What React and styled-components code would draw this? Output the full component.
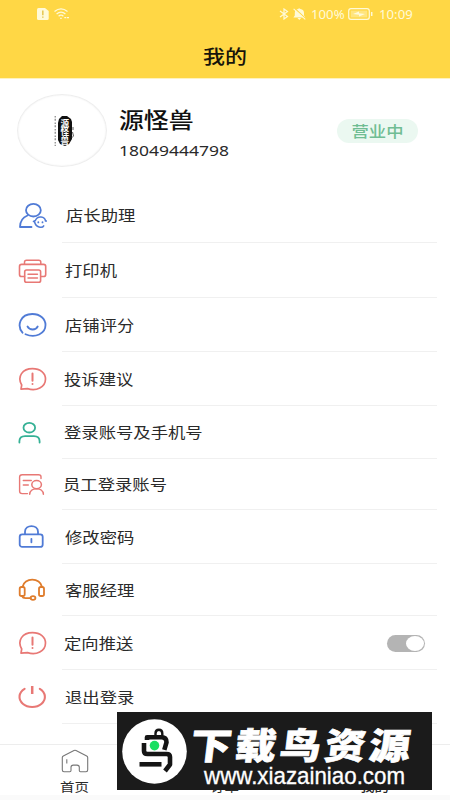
import React from "react";
import styled, { createGlobalStyle } from "styled-components";

const GlobalStyle = createGlobalStyle`
  * {
    box-sizing: border-box;
  }
  body {
    margin: 0;
    background: #fff;
    font-family: "Noto Sans", "Noto Sans CJK SC", sans-serif;
    color: #2a2a2a;
    overflow: hidden;
  }
  svg {
    display: block;
    flex: none;
  }
`;

const Page = styled.div`
  position: relative;
  width: 450px;
  height: 800px;
  overflow: hidden;
  display: flex;
  flex-direction: column;
  background: #fff;
`;

// the whole screen uses slightly widened lettering
const Wide = styled.span`
  display: inline-block;
  white-space: nowrap;
  line-height: 1;
  font-size: ${(p) => p.$size}px;
  font-weight: ${(p) => p.$weight || 400};
  transform: scaleX(${(p) => p.$stretch || 1.155});
  transform-origin: ${(p) => p.$origin || "left"} center;
`;

const Header = styled.header`
  height: 79px;
  flex: none;
  background: #ffd745;
  border-bottom: 1px solid #fff3bf;
`;

const StatusBar = styled.div`
  height: 28px;
  padding: 0 37px 0 37px;
  display: flex;
  align-items: center;
  justify-content: space-between;
  color: #fffad8;
`;

const StatusGroup = styled.div`
  display: flex;
  align-items: center;
  gap: ${(p) => p.$gap}px;
`;

const StatusText = styled.div`
  width: ${(p) => p.$width}px;
  margin-left: ${(p) => p.$left}px;
  padding-top: 1px;
  display: flex;
`;

const Title = styled.h1`
  margin: 0;
  height: 58px;
  display: flex;
  align-items: center;
  justify-content: center;
  color: #17140a;
  font-weight: 400;
`;

const Profile = styled.section`
  height: 109px;
  flex: none;
  padding: 15px 32px 0 17px;
  display: flex;
  align-items: flex-start;
`;

const Avatar = styled.div`
  width: 90px;
  height: 73px;
  border-radius: 50%;
  border: 1px solid #eee;
  box-shadow: inset 0 0 2px #eee;
  display: flex;
  align-items: center;
  justify-content: center;
`;

const Names = styled.div`
  flex: 1;
  padding: 15px 0 0 12px;
  display: flex;
  flex-direction: column;
  gap: 12px;
`;

const Name = styled(Wide)`
  color: #111;
  align-self: flex-start;
`;

const Phone = styled(Wide)`
  align-self: flex-start;
`;

const Badge = styled.div`
  width: 81px;
  height: 24px;
  margin-top: 25px;
  border-radius: 12px;
  background: #ebf8f1;
  color: #70bd93;
  display: flex;
  align-items: center;
  justify-content: center;
`;

const Menu = styled.main`
  flex: 1;
`;

const Row = styled.div`
  height: ${(p) => p.$height}px;
  padding-left: 17px;
  display: flex;
`;

const IconCell = styled.div`
  width: 45px;
  display: flex;
  align-items: center;
`;

const RowBody = styled.div`
  width: 375px;
  padding: 1px 12px 0 ${(p) => p.$indent}px;
  border-bottom: 1px solid #f0f0f0;
  display: flex;
  align-items: center;
  justify-content: space-between;
`;

const Switch = styled.div`
  width: 38px;
  height: 17px;
  padding: 1px;
  border-radius: 9px;
  background: #b4b4b4;
  display: flex;
  justify-content: flex-end;
`;

const Knob = styled.div`
  width: 18px;
  height: 15px;
  border-radius: 50%;
  background: #fff;
`;

const TabBar = styled.nav`
  height: 56px;
  flex: none;
  display: grid;
  grid-template-columns: repeat(3, 1fr);
  border-top: 1px solid #ededed;
  border-bottom: 5px solid #fafafa;
`;

const Tab = styled.div`
  display: flex;
  flex-direction: column;
  align-items: center;
  justify-content: space-between;
  padding: 4px 0 1px;
`;

const Banner = styled.aside`
  position: absolute;
  left: 117px;
  top: 712px;
  width: 315px;
  height: 78px;
  padding-left: 5px;
  display: flex;
  align-items: center;
  background: #1b1b1b;
  color: #fff;
`;

const BannerText = styled.div`
  padding-left: 4px;
  height: 78px;
  display: flex;
  flex-direction: column;
`;

const BannerTitle = styled.div`
  margin-top: 7px;
  font: 900 41px/48px "Noto Sans CJK SC", sans-serif;
  -webkit-text-stroke: 0.8px #fff;
  white-space: nowrap;
  letter-spacing: 3.7px;
  transform: skewX(-7deg) scaleY(0.88);
`;

const BannerUrl = styled.div`
  margin: -4px 0 0 13px;
  font: 22px/26px "Liberation Sans", sans-serif;
  -webkit-text-stroke: 0.3px #fff;
  white-space: nowrap;
  transform: scale(1.015, 1.08);
  transform-origin: left;
`;

const BLUE = "#507bd6";
const RED = "#e87875";
const GREEN = "#35b195";
const ORANGE = "#df7c2c";

const Icon = ({ color, width = 30, children }) => (
  <svg
    width={width}
    height="30"
    viewBox={`0 0 ${width} 30`}
    fill="none"
    stroke={color}
    strokeWidth="1.8"
    strokeLinecap="round"
    strokeLinejoin="round"
  >
    {children}
  </svg>
);

const AssistantIcon = () => (
  <Icon color={BLUE}>
    <ellipse cx="16.4" cy="9.2" rx="7.4" ry="6.3" />
    <path d="M10.5 14.5C5.5 16.5 3 20 3 26h11.5" />
    <path d="M16.5 20.5l2-1.2c2-5 9.5-4 10 .8h1.2M17.5 20.5c1.2 6.5 8 6.7 9.2 4.3" strokeWidth="1.5" />
    <path d="M21.3 21.2v.2M25.5 21.2v.2" />
  </Icon>
);

const PrinterIcon = () => (
  <Icon color={RED}>
    <path d="M7.5 8V6.3Q7.5 4.3 9.5 4.3h12.3q2 0 2 2V8" strokeWidth="1.5" />
    <path
      d="M7.5 20.5H4.7Q2.5 20.5 2.5 18.4v-8q0-2 2.2-2h21.8q2.2 0 2.2 2v8q0 2.1-2.2 2.1h-2.7"
      strokeWidth="1.6"
    />
    <rect x="7.7" y="14" width="15.9" height="12.2" rx="1.8" strokeWidth="1.6" />
    <path d="M11 18.2h9.5M11 22h9.5" strokeWidth="1.4" />
  </Icon>
);

const SmileIcon = () => (
  <Icon color={BLUE}>
    <path d="M5.5 22.7C-.5 15.5 3.3 4 15.3 4c8 0 13.2 5 13.2 11 0 8.7-10.3 13.5-20 9.2" />
    <path d="M10.5 16.5c2.2 4 8.2 4 10.2 0" />
  </Icon>
);

const AlertIcon = () => (
  <Icon color={RED}>
    <path
      d="M4 25.2l.7-4.2C-.2 12.5 5.5 4.6 15.5 4.6c7.8 0 13 4.6 13 10.4 0 8-9.2 12.8-18 9.6z"
      strokeWidth="1.7"
    />
    <path d="M15.5 9.5v7.3M15.5 20v.1" strokeWidth="2" />
  </Icon>
);

const PersonIcon = () => (
  <Icon color={GREEN}>
    <ellipse cx="12.3" cy="9.7" rx="5.8" ry="4.8" />
    <path d="M2.4 24.5v-1.2q0-5.2 5.7-5.2h8.8q5.7 0 5.7 5.2v1.2" />
  </Icon>
);

const StaffIcon = () => (
  <Icon color={RED}>
    <path
      d="M24 8.5V6.8Q24 4.8 21.5 4.8H5.2Q2.6 4.8 2.6 7v14.3q0 2.3 2.6 2.3h5.3M6.3 10.5h8M6.3 15h5"
      strokeWidth="1.4"
    />
    <ellipse cx="19.6" cy="14.6" rx="4.8" ry="4.1" strokeWidth="1.5" />
    <path d="M12.7 24.3c.2-7.4 13.5-7.4 13.7 0" strokeWidth="1.5" />
  </Icon>
);

const LockIcon = () => (
  <Icon color={BLUE}>
    <rect x="2.7" y="12.3" width="23" height="12.6" rx="2.5" />
    <path d="M8 12v-2.2C8 2.3 21 2.3 21 9.8V12M14.4 16.8v3.5" />
  </Icon>
);

const HeadsetIcon = () => (
  <Icon color={ORANGE}>
    <path d="M5.5 12C7 2.2 23.5 2.2 25 12" />
    <rect x="2.7" y="12" width="5" height="9" rx="1.8" />
    <rect x="22" y="12" width="5" height="9" rx="1.8" />
    <path d="M5 21.2q.8 2 3.5 2h5.2" />
    <ellipse cx="16" cy="23" rx="2.4" ry="1.8" />
  </Icon>
);

const PowerIcon = () => (
  <Icon color={RED}>
    <path d="M7.6 6.8A12.7 10.1 0 1 0 22.8 6.8" strokeWidth="2.1" />
    <path d="M15.2 4v8" strokeWidth="2.5" strokeLinecap="butt" />
  </Icon>
);

const AvatarLogo = () => (
  <svg width="30" height="42" viewBox="0 0 30 42">
    <path d="M12 9l3-3h5l4 3 1 3v17l-3 5-4 2-5-2-2-4V13z" fill="#111" />
    <path d="M26 17v3M25.5 22l1 4-2 2" stroke="#333" fill="none" strokeWidth=".8" />
    <g fill="#fff" fontSize="8.6" fontWeight="700" textAnchor="middle" fontFamily="Noto Sans CJK SC">
      <text x="17.8" y="16.5">源</text>
      <text x="17.8" y="25">怪</text>
      <text x="17.8" y="33.5">兽</text>
    </g>
    <path d="M8.2 6v30" stroke="#777" strokeWidth="1.1" strokeDasharray="1.5 1.2 2 1.8" />
  </svg>
);

const BirdLogo = () => (
  <svg width="65" height="65" viewBox="0 0 65 65">
    <circle cx="32.5" cy="32.5" r="32.3" fill="#fff" />
    <g fill="none" stroke="#151515" strokeWidth="4.6" strokeLinejoin="round">
      <path d="M33.5 17.5v-3q0-3.7 3.4-3.7t3.4 3.7v3" strokeWidth="2.4" />
      <path d="M25 21v-2.7h14.5q5 0 5 5l-2.2 7.5" />
      <path d="M22 24v8q0 3 3.5 3h19q3.5 0 3.5 3v7.5L43 52" />
      <path d="M17.5 45.3h22" />
    </g>
    <circle cx="32.5" cy="26.6" r="4.8" fill="#19df61" />
  </svg>
);

const SimIcon = () => (
  <svg width="12" height="12" viewBox="0 0 12 12">
    <path d="M1.5 0H8l3.7 3v7.5q0 1.5-1.5 1.5H1.5Q0 12 0 10.5v-9Q0 0 1.5 0z" fill="currentColor" />
    <path d="M5.8 2.5v4.7M5.8 8.5v1.3" stroke="#e7c957" strokeWidth="1.6" />
  </svg>
);

const WifiIcon = () => (
  <svg width="16" height="12" viewBox="0 0 16 12" fill="none" stroke="currentColor" strokeWidth="1.3">
    <path d="M.5 3.5Q7 -1.8 13.5 3.5M2.6 6Q7 2.3 11.4 6M4.6 8.2Q7 6.2 9.4 8.2M6.2 10.3h1.5M10.3 9.6h2M13 9.6h2" />
  </svg>
);

const BluetoothIcon = () => (
  <svg width="10" height="12" viewBox="0 0 10 12" fill="none" stroke="currentColor" strokeWidth="1.2">
    <path d="M1 3l7.5 5.5L5 11V1l3.5 2.5L1 9" />
  </svg>
);

const MutedBellIcon = () => (
  <svg width="13" height="12" viewBox="0 0 13 12">
    <path d="M6.2.3l1.2.8q3.6.6 3.6 4v2.3l1.4 2H.4l1.4-2V5.1Q1.8 1.7 5 1.1zM4.5 10h3.6L6.3 12z" fill="currentColor" />
    <path d="M1.3 0l11.2 10.4" stroke="#ffd745" strokeWidth="1.2" />
    <path d="M.6 .8l11.7 10.6" stroke="currentColor" strokeWidth="1.1" />
  </svg>
);

const BatteryIcon = () => (
  <svg width="25" height="12" viewBox="0 0 25 12" fill="none" stroke="currentColor">
    <rect x=".7" y=".7" width="20.6" height="10.6" rx="2.3" strokeWidth="1.2" />
    <rect x="2.8" y="2.6" width="16.4" height="6.8" fill="currentColor" opacity=".4" stroke="none" />
    <path d="M5 6l6-2.5v1.7l6 .8-6 2.5V6.8z" fill="currentColor" stroke="none" />
    <path d="M23.7 4v4" strokeWidth="1.5" />
  </svg>
);

const HomeIcon = () => (
  <svg width="28" height="24" viewBox="0 0 28 24" fill="none" stroke="#777" strokeWidth="1.1">
    <path
      d="M3 22.7q-1.7 0-1.7-2V8.5q0-1 1-1.5L13 1.5q1-.5 2 0L25.7 7q1 .5 1 1.5v12.2q0 2-1.7 2h-5.5q-1.2 0-1.2-1.2v-3.2q0-2.2-2.3-2.2h-3.7q-2.3 0-2.3 2.2v3.2q0 1.2-1.2 1.2z"
      strokeLinejoin="round"
    />
    <path d="M5.8 10.3v4.2" />
  </svg>
);

const items = [
  { label: "店长助理", icon: AssistantIcon, height: 55, indent: 4 },
  { label: "打印机", icon: PrinterIcon, height: 55, indent: 3 },
  { label: "店铺评分", icon: SmileIcon, height: 54, indent: 3 },
  { label: "投诉建议", icon: AlertIcon, height: 54, indent: 2 },
  { label: "登录账号及手机号", icon: PersonIcon, height: 53, indent: 2 },
  { label: "员工登录账号", icon: StaffIcon, height: 51, indent: 1 },
  { label: "修改密码", icon: LockIcon, height: 54, indent: 3 },
  { label: "客服经理", icon: HeadsetIcon, height: 52, indent: 3 },
  { label: "定向推送", icon: AlertIcon, height: 54, indent: 2, toggle: true },
  { label: "退出登录", icon: PowerIcon, height: 54, indent: 3 },
];

const MenuRow = ({ item }) => {
  const ItemIcon = item.icon;
  return (
    <Row $height={item.height}>
      <IconCell>
        <ItemIcon />
      </IconCell>
      <RowBody $indent={item.indent}>
        <Wide $size={15}>{item.label}</Wide>
        {item.toggle && (
          <Switch>
            <Knob />
          </Switch>
        )}
      </RowBody>
    </Row>
  );
};

const App = () => (
  <>
    <GlobalStyle />
    <Page>
      <Header>
        <StatusBar>
          <StatusGroup $gap={5}>
            <SimIcon />
            <WifiIcon />
          </StatusGroup>
          <StatusGroup $gap={4}>
            <BluetoothIcon />
            <MutedBellIcon />
            <StatusText $width={33} $left={1}>
              <Wide $size={12} $stretch={1.1}>100%</Wide>
            </StatusText>
            <BatteryIcon />
            <StatusText $width={34} $left={2}>
              <Wide $size={12} $stretch={1.1}>10:09</Wide>
            </StatusText>
          </StatusGroup>
        </StatusBar>
        <Title>
          <Wide $size={19} $weight={500} $origin="center">我的</Wide>
        </Title>
      </Header>

      <Profile>
        <Avatar>
          <AvatarLogo />
        </Avatar>
        <Names>
          <Name $size={21.5} $weight={500}>源怪兽</Name>
          <Phone $size={15} $stretch={1.165}>18049444798</Phone>
        </Names>
        <Badge>
          <Wide $size={15} $weight={500} $origin="center">营业中</Wide>
        </Badge>
      </Profile>

      <Menu>
        {items.map((item) => (
          <MenuRow key={item.label} item={item} />
        ))}
      </Menu>

      <TabBar>
        <Tab>
          <HomeIcon />
          <Wide $size={12.5} $origin="center">首页</Wide>
        </Tab>
        <Tab>
          <span />
          <Wide $size={12.5} $origin="center">订单</Wide>
        </Tab>
        <Tab>
          <span />
          <Wide $size={12.5} $weight={500} $origin="center">我的</Wide>
        </Tab>
      </TabBar>

      <Banner>
        <BirdLogo />
        <BannerText>
          <BannerTitle>下载鸟资源</BannerTitle>
          <BannerUrl>www.xiazainiao.com</BannerUrl>
        </BannerText>
      </Banner>
    </Page>
  </>
);

export default App;
